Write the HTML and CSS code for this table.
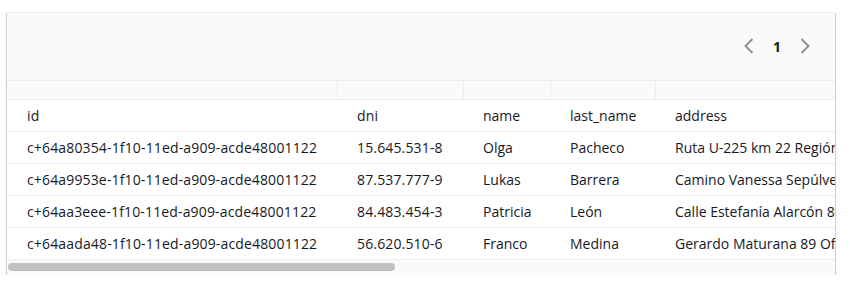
FILE: index.html
```html
<!DOCTYPE html>
<html>
<head>
<meta charset="utf-8">
<link rel="stylesheet" href="styles.css">
</head>
<body>
<div class="card">
  <div class="header">
    <div class="pager">
      <svg class="chev" width="10" height="16" viewBox="0 0 10 16"><path d="M8.5 1 L1.5 8 L8.5 15" fill="none" stroke="#879596" stroke-width="2"/></svg>
      <span class="page">1</span>
      <svg class="chev" width="10" height="16" viewBox="0 0 10 16"><path d="M1.5 1 L8.5 8 L1.5 15" fill="none" stroke="#879596" stroke-width="2"/></svg>
    </div>
  </div>
  <div class="tablewrap">
    <div class="grid top">
      <div class="c"></div><div class="c sep"></div><div class="c sep"></div><div class="c sep"></div><div class="c sep"></div>
    </div>
    <div class="grid row head">
      <div class="c">id</div><div class="c">dni</div><div class="c">name</div><div class="c">last_name</div><div class="c">address</div>
    </div>
    <div class="grid row">
      <div class="c">c+64a80354-1f10-11ed-a909-acde48001122</div><div class="c">15.645.531-8</div><div class="c">Olga</div><div class="c">Pacheco</div><div class="c">Ruta U-225 km 22 Región de Los Lagos</div>
    </div>
    <div class="grid row">
      <div class="c">c+64a9953e-1f10-11ed-a909-acde48001122</div><div class="c">87.537.777-9</div><div class="c">Lukas</div><div class="c">Barrera</div><div class="c">Camino Vanessa Sepúlveda 431</div>
    </div>
    <div class="grid row">
      <div class="c">c+64aa3eee-1f10-11ed-a909-acde48001122</div><div class="c">84.483.454-3</div><div class="c">Patricia</div><div class="c">León</div><div class="c">Calle Estefanía Alarcón 89</div>
    </div>
    <div class="grid row">
      <div class="c">c+64aada48-1f10-11ed-a909-acde48001122</div><div class="c">56.620.510-6</div><div class="c">Franco</div><div class="c">Medina</div><div class="c">Gerardo Maturana 89 Of. 12</div>
    </div>
  </div>
  <div class="scroll"><div class="thumb"></div></div>
</div>
</body>
</html>
```
FILE: styles.css
```css
html, body { margin: 0; padding: 0; background: #fff; }
body {
  font-family: "Open Sans", "Noto Sans", sans-serif;
  font-size: 14px;
  color: #16191f;
  padding: 12px 0 0 7px;
}
.card {
  width: 828px;
  height: 263px;
  box-sizing: border-box;
  background: #fff;
  border-top: 1px solid #eaeded;
  box-shadow: 0 1px 1px 0 rgba(0,28,36,.3), 1px 1px 1px 0 rgba(0,28,36,.15), -1px 1px 1px 0 rgba(0,28,36,.15);
  display: flex;
  flex-direction: column;
  overflow: hidden;
}
.header {
  height: 67px;
  background: #fafafa;
  border-bottom: 1px solid #eaeded;
  display: flex;
  justify-content: flex-end;
  align-items: center;
  padding-right: 25px;
}
.pager { display: flex; align-items: center; margin-top: -1px; }
.chev { display: block; }
.page { font-weight: 700; font-size: 14px; width: 46px; text-align: center; color: #16191f; }
.tablewrap { overflow: hidden; }
.grid {
  display: grid;
  grid-template-columns: 330px 126px 87px 105px 400px;
  white-space: nowrap;
}
.top { height: 18px; background: #fafafa; border-bottom: 1px solid #eaeded; }
.sep { border-left: 1px solid #eaeded; }
.row { height: 31px; border-bottom: 1px solid #eaeded; align-items: center; }
.row .c { padding-left: 20px; overflow: hidden; }
.row .c:nth-child(-n+2) { letter-spacing: 0.15px; }
.head { background: #fff; }
.scroll {
  flex: 1;
  background: #fafafa;
  padding: 3px 1px 0 1px;
}
.thumb {
  width: 387px;
  height: 8px;
  background: #c1c1c1;
  border-radius: 4px;
}
```
